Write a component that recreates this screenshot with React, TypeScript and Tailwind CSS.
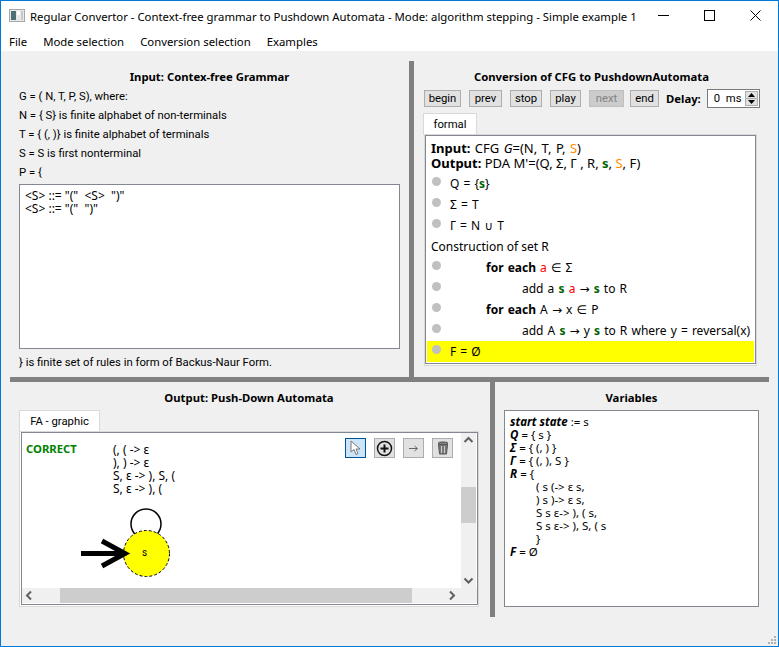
import type { ReactNode } from 'react';

const Green = ({ children }: { children: ReactNode }) => (
  <b className="font-bold text-[#006400]">{children}</b>
);
const Orange = ({ children }: { children: ReactNode }) => (
  <span className="text-[#ff8c00]">{children}</span>
);
const Red = ({ children }: { children: ReactNode }) => (
  <span className="text-[#ff0000]">{children}</span>
);
// math glyphs come out too small in the body font
const Sym = ({ children }: { children: ReactNode }) => (
  <span className="font-['DejaVu_Sans',sans-serif]">{children}</span>
);

const Splitter = ({ className }: { className: string }) => <div className={`bg-[#808080] shrink-0 ${className}`} />;

const Chevron = ({ d }: { d: string }) => (
  <svg width="15" height="15" viewBox="0 0 15 15" fill="none" stroke="#606060" strokeWidth="2" className="shrink-0">
    <path d={d} />
  </svg>
);

const ToolBtn = ({ active, children }: { active?: boolean; children: ReactNode }) => (
  <div
    className={`w-[21px] h-[20px] flex items-center justify-center border ${
      active ? 'border-[#005499] bg-[#cce4f7]' : 'border-[#adadad] bg-[#e1e1e1]'
    }`}
  >
    {children}
  </div>
);

const StepBtn = ({ label, w, disabled }: { label: string; w: string; disabled?: boolean }) => (
  <div
    className={`${w} h-[17px] flex items-center justify-center border ${
      disabled ? 'border-[#bfbfbf] bg-[#cccccc] text-[#838383]' : 'border-[#adadad] bg-[#e1e1e1]'
    }`}
  >
    {label}
  </div>
);

const Step = ({ indent, hl, children }: { indent: string; hl?: boolean; children: ReactNode }) => (
  <div className={`h-[21px] flex items-center pl-[5px] ${hl ? 'bg-[#ffff00] mr-[1px]' : ''}`}>
    <span className="w-[9px] h-[9px] rounded-full bg-[#c0c0c0] mb-[4px] shrink-0" />
    <div className={`${indent} whitespace-pre text-[12px] [word-spacing:1px] font-['Noto_Sans',sans-serif]`}>{children}</div>
  </div>
);

const Title = ({ h, children }: { h: string; children: ReactNode }) => (
  <div className={`font-bold text-center pt-[9px] ${h} leading-[14px] text-[11.3px] font-['Noto_Sans',sans-serif] shrink-0`}>
    {children}
  </div>
);

const stepBtns = [
  { label: 'begin', w: 'w-[37px]' },
  { label: 'prev', w: 'w-[33px]' },
  { label: 'stop', w: 'w-[32px]' },
  { label: 'play', w: 'w-[31px]' },
  { label: 'next', w: 'w-[35px]', disabled: true },
  { label: 'end', w: 'w-[29px] ml-[-2px]' },
];

const varLines = ['( s (-> ε s,', ') s )-> ε s,', 'S s ε-> ), ( s,', 'S s ε-> ), S, ( s', '}'];

export default function App() {
  return (
    <div className="w-[779px] h-[647px] border border-[#0078d7] bg-white flex flex-col text-[11.3px] leading-[15px] text-black font-['Roboto',sans-serif] overflow-hidden">
      {/* title bar */}
      <div className="h-[29px] flex items-center shrink-0 pl-[8px] font-['Noto_Sans',sans-serif] text-[11.35px]">
        <svg width="16" height="16" viewBox="0 0 16 16" className="shrink-0">
          <rect x="0.5" y="1.5" width="15" height="12" fill="#e8e8e8" stroke="#a8a8a8" />
          <rect x="2" y="3" width="5" height="9" fill="#4d6f75" />
          <rect x="8" y="3" width="3" height="4" fill="#ffffff" />
          <rect x="12" y="3" width="2" height="9" fill="#c8c8c8" />
        </svg>
        <span className="ml-[5px] mt-[1px] whitespace-nowrap">
          Regular Convertor - Context-free grammar to Pushdown Automata - Mode: algorithm stepping - Simple example 1
        </span>
        <div className="ml-auto flex items-center pr-[17px] gap-[35px]">
          <svg width="11" height="11" viewBox="0 0 11 11" stroke="#000" fill="none">
            <path d="M0 5.500h11" />
          </svg>
          <svg width="11" height="11" viewBox="0 0 11 11" stroke="#000" fill="none">
            <rect x="0.5" y="0.5" width="10" height="10" />
          </svg>
          <svg width="11" height="11" viewBox="0 0 11 11" stroke="#000" fill="none">
            <path d="M0.500 0.500l10 10M10.500 0.500l-10 10" />
          </svg>
        </div>
      </div>
      {/* menu */}
      <div className="h-[21px] flex items-center shrink-0 pl-[8px] pt-[1px] gap-[16px] font-['Noto_Sans',sans-serif] text-[11.35px]">
        <span>File</span>
        <span>Mode selection</span>
        <span>Conversion selection</span>
        <span>Examples</span>
      </div>

      <div className="flex-1 bg-[#f0f0f0] px-[9px] pt-[10px] flex flex-col relative">
        {/* top row */}
        <div className="h-[316px] flex shrink-0">
          <div className="w-[399px] shrink-0 flex flex-col px-[9px]">
            <Title h="h-[28px]">Input: Contex-free Grammar</Title>
            <div className="h-[19px]">G = ( N, T, P, S), where:</div>
            <div className="h-[19px]">N = {'{'} S{'}'} is finite alphabet of non-terminals</div>
            <div className="h-[19px]">T = {'{'} (, ){'}'} is finite alphabet of terminals</div>
            <div className="h-[19px]">S = S is first nonterminal</div>
            <div className="h-[19px]">P = {'{'}</div>
            <div className="h-[165px] border border-[#828790] bg-white px-[5px] pt-[4px] leading-[13px] text-[12px] font-['Noto_Sans',sans-serif]">
              <div className="whitespace-pre">{'<S> ::= "("  <S>  ")"'}</div>
              <div className="whitespace-pre">{'<S> ::= "("  ")"'}</div>
            </div>
            <div className="mt-[6px]">{'}'} is finite set of rules in form of Backus-Naur Form.</div>
          </div>
          <Splitter className="w-[5px] h-full" />
          <div className="flex-1 min-w-0 flex flex-col px-[9px]">
            <Title h="h-[29px]">Conversion of CFG to PushdownAutomata</Title>
            <div className="flex items-center h-[17px] gap-[8px] pl-[1px]">
              {stepBtns.map((b) => (
                <StepBtn key={b.label} {...b} />
              ))}
              <b className="ml-[-1px] font-bold font-['Noto_Sans',sans-serif]">Delay:</b>
              <div className="w-[53px] h-[19px] border border-[#7a7a7a] bg-white flex items-center pl-[6px] ml-[-2px] whitespace-pre">
                {'0  ms'}
                <div className="ml-auto mr-[1px] w-[13px] h-[15px] flex flex-col">
                  <div className="h-[8px] bg-[#e1e1e1] border border-[#adadad] flex items-center justify-center">
                    <svg width="7" height="4" viewBox="0 0 7 4"><path d="M3.500 0L7 4H0z" fill="#000" /></svg>
                  </div>
                  <div className="h-[8px] -mt-px bg-[#e1e1e1] border border-[#adadad] flex items-center justify-center">
                    <svg width="7" height="4" viewBox="0 0 7 4"><path d="M0 0h7L3.500 4z" fill="#000" /></svg>
                  </div>
                </div>
              </div>
            </div>
            <div className="h-[22px] w-[54px] mt-[6px] border border-b-0 border-[#d9d9d9] bg-white flex items-center justify-center">formal</div>
            <div className="w-[333px] h-[232px] border border-[#d9d9d9] bg-white ml-[1px] -mt-px">
              <div className="w-[331px] h-[229px] border border-[#828790] pl-[1px] pt-[5px] leading-[15px] font-['Noto_Sans',sans-serif] text-[12px]">
                <div className="pl-[4px] text-[13px] whitespace-pre [word-spacing:1px]">
                  <b>Input:</b> CFG <i>G</i>=(N, T, P, <Orange>S</Orange>)
                </div>
                <div className="pl-[4px] text-[13px] whitespace-pre">
                  <b>Output:</b> PDA M'=(Q, Σ, Γ , R, <Green>s</Green>, <Orange>S</Orange>, F)
                </div>
                <div className="h-[2px]" />
                <Step indent="ml-[9px]">Q = {'{'}<Green>s</Green>{'}'}</Step>
                <Step indent="ml-[9px]">Σ = T</Step>
                <Step indent="ml-[9px]">Γ = N <Sym>∪</Sym> T</Step>
                <div className="h-[21px] flex items-center pl-[4px] mb-[-1px]">Construction of set R</div>
                <div className="h-[1px]" />
                <Step indent="ml-[45px]"><b>for each</b> <Red>a</Red> <Sym>∈</Sym> Σ</Step>
                <Step indent="ml-[81px]">add a <Green>s</Green> <Red>a</Red> <Sym>→</Sym> <Green>s</Green> to R</Step>
                <Step indent="ml-[45px]"><b>for each</b> A <Sym>→</Sym> x <Sym>∈</Sym> P</Step>
                <Step indent="ml-[81px]">add A <Green>s</Green> <Sym>→</Sym> y <Green>s</Green> to R where y = reversal(x)</Step>
                <Step indent="ml-[9px]" hl>F = Ø</Step>
              </div>
            </div>
          </div>
        </div>
        <Splitter className="h-[5px] w-full" />
        {/* bottom row */}
        <div className="h-[235px] flex shrink-0">
          <div className="w-[480px] shrink-0 flex flex-col pl-[9px] pr-[11px]">
            <Title h="h-[28px]">Output: Push-Down Automata</Title>
            <div className="h-[22px] w-[81px] border border-b-0 border-[#d9d9d9] bg-white flex items-center justify-center">FA - graphic</div>
            <div className="h-[176px] w-[460px] border border-[#d9d9d9] bg-white -mt-px">
              <div className="h-[173px] w-[457px] ml-[1px] border border-[#828790] flex flex-col">
                <div className="flex-1 flex min-h-0">
                  <div className="flex-1 relative">
                    <b className="absolute left-[4px] top-[8px] text-[#008000] font-['Noto_Sans',sans-serif]">CORRECT</b>
                    <div className="absolute left-[91px] top-[10px] text-[12px] leading-[13px] whitespace-pre font-['Noto_Sans',sans-serif]">
                      <div>(, ( -&gt; ε</div>
                      <div>), ) -&gt; ε</div>
                      <div>S, ε -&gt; ), S, (</div>
                      <div>S, ε -&gt; ), (</div>
                    </div>
                    <svg className="absolute left-0 top-0" width="438" height="155" viewBox="0 0 438 155">
                      <circle cx="124" cy="91" r="15" fill="none" stroke="#000" strokeWidth="1.5" />
                      <circle cx="124.5" cy="120.5" r="23" fill="#ffff00" stroke="#000" strokeDasharray="3 2" />
                      <path d="M59 120.500h43" stroke="#000" strokeWidth="5" fill="none" />
                      <path d="M80 108l23 12.500-23 12.500" stroke="#000" strokeWidth="5" fill="none" />
                    </svg>
                    <span className="absolute left-[120px] top-[114px] text-[10px] leading-[12px]">s</span>
                    <div className="absolute left-[323px] top-[5px] flex gap-[8px]">
                      <ToolBtn active>
                        <svg width="13" height="16" viewBox="0 0 13 16">
                          <path d="M2 1v11l3-2.500 2 5 2-1-2-4.500h4z" fill="#fff" stroke="#777" />
                        </svg>
                      </ToolBtn>
                      <ToolBtn>
                        <svg width="17" height="17" viewBox="0 0 17 17" fill="none" stroke="#111">
                          <circle cx="8.500" cy="8.500" r="7" strokeWidth="1.500" />
                          <path d="M4.500 8.500h8M8.500 4.500v8" strokeWidth="2" />
                        </svg>
                      </ToolBtn>
                      <ToolBtn>
                        <svg width="11" height="7" viewBox="0 0 11 7" fill="none" stroke="#666">
                          <path d="M1 3.500h8M6.500 1l3 2.500-3 2.500" />
                        </svg>
                      </ToolBtn>
                      <ToolBtn>
                        <svg width="12" height="14" viewBox="0 0 12 14">
                          <ellipse cx="6" cy="2.500" rx="5" ry="1.500" fill="#888" stroke="#444" />
                          <path d="M1.500 3.500l1 9.500h7l1-9.500z" fill="#777" stroke="#555" />
                          <path d="M4.500 5v7M7.500 5v7" stroke="#ccc" />
                        </svg>
                      </ToolBtn>
                    </div>
                  </div>
                  <div className="w-[15px] mr-[1px] bg-[#f0f0f0] flex flex-col">
                    <Chevron d="M3.500 9l4-4 4 4" />
                    <div className="h-[36px] mt-[39px] bg-[#cdcdcd]" />
                    <div className="flex-1" />
                    <Chevron d="M3.500 5.500l4 4 4-4" />
                  </div>
                </div>
                <div className="h-[15px] mb-[1px] bg-[#f0f0f0] flex shrink-0 items-center">
                  <Chevron d="M9 3.500l-4 4 4 4" />
                  <div className="w-[23px]" />
                  <div className="w-[352px] h-full bg-[#cdcdcd]" />
                  <div className="w-[32px]" />
                  <Chevron d="M6 3.500l4 4-4 4" />
                </div>
              </div>
            </div>
          </div>
          <Splitter className="w-[5px] h-full" />
          <div className="flex-1 min-w-0 flex flex-col pl-[9px] pr-[10px]">
            <Title h="h-[28px]">Variables</Title>
            <div className="h-[197px] border border-[#828790] bg-white px-[5px] pt-[4px] text-[11.5px] leading-[13px] whitespace-pre font-['Noto_Sans',sans-serif]">
              <div><b><i>start state</i></b> := s</div>
              <div><b><i>Q</i></b> = {'{'} s {'}'}</div>
              <div><b><i>Σ</i></b> = {'{'} (, ) {'}'}</div>
              <div><b><i>Γ</i></b> = {'{'} (, ), S {'}'}</div>
              <div><b><i>R</i></b> = {'{'}</div>
              {varLines.map((l) => (
                <div key={l} className="pl-[26px]">{l}</div>
              ))}
              <div><b><i>F</i></b> = Ø</div>
            </div>
          </div>
        </div>
        {/* size grip */}
        <svg className="absolute right-[1px] bottom-[1px]" width="9" height="9" viewBox="0 0 9 9" fill="#b0b0b0">
          <rect x="6" y="0" width="2" height="2" />
          <rect x="3" y="3" width="2" height="2" />
          <rect x="6" y="3" width="2" height="2" />
          <rect x="0" y="6" width="2" height="2" />
          <rect x="3" y="6" width="2" height="2" />
          <rect x="6" y="6" width="2" height="2" />
        </svg>
      </div>
    </div>
  );
}
